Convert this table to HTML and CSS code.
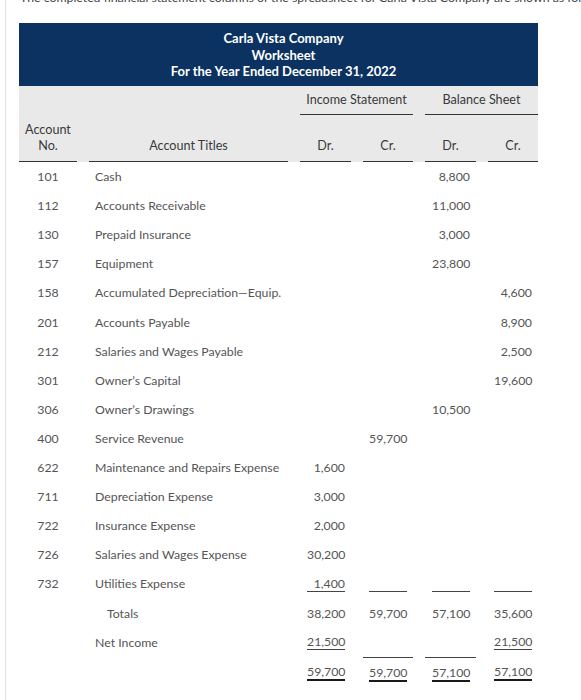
FILE: index.html
```html
<!DOCTYPE html>
<html>
<head>
<meta charset="utf-8">
<link rel="stylesheet" href="styles.css">
</head>
<body>
<div class="page">
  <p class="intro">The completed financial statement columns of the spreadsheet for Carla Vista Company are shown as follows</p>
  <div class="sheet">
    <div class="title">
      <div>Carla Vista Company</div>
      <div>Worksheet</div>
      <div>For the Year Ended December 31, 2022</div>
    </div>
    <div class="head">
      <div class="h-no">Account<br>No.</div>
      <div class="h-title">Account Titles</div>
      <div class="h-group g1">Income Statement</div>
      <div class="h-group g2">Balance Sheet</div>
      <div class="h-dc c3">Dr.</div>
      <div class="h-dc c4">Cr.</div>
      <div class="h-dc c5">Dr.</div>
      <div class="h-dc c6">Cr.</div>
    </div>
    <div class="body">
      <div class="row"><div class="no">101</div><div class="t">Cash</div><div class="n"></div><div class="n"></div><div class="n"><span class="v">8,800</span></div><div class="n"></div></div>
      <div class="row"><div class="no">112</div><div class="t">Accounts Receivable</div><div class="n"></div><div class="n"></div><div class="n"><span class="v">11,000</span></div><div class="n"></div></div>
      <div class="row"><div class="no">130</div><div class="t">Prepaid Insurance</div><div class="n"></div><div class="n"></div><div class="n"><span class="v">3,000</span></div><div class="n"></div></div>
      <div class="row"><div class="no">157</div><div class="t">Equipment</div><div class="n"></div><div class="n"></div><div class="n"><span class="v">23,800</span></div><div class="n"></div></div>
      <div class="row tall"><div class="no">158</div><div class="t">Accumulated Depreciation—Equip.</div><div class="n"></div><div class="n"></div><div class="n"></div><div class="n"><span class="v">4,600</span></div></div>
      <div class="row"><div class="no">201</div><div class="t">Accounts Payable</div><div class="n"></div><div class="n"></div><div class="n"></div><div class="n"><span class="v">8,900</span></div></div>
      <div class="row"><div class="no">212</div><div class="t">Salaries and Wages Payable</div><div class="n"></div><div class="n"></div><div class="n"></div><div class="n"><span class="v">2,500</span></div></div>
      <div class="row"><div class="no">301</div><div class="t">Owner’s Capital</div><div class="n"></div><div class="n"></div><div class="n"></div><div class="n"><span class="v">19,600</span></div></div>
      <div class="row"><div class="no">306</div><div class="t">Owner’s Drawings</div><div class="n"></div><div class="n"></div><div class="n"><span class="v">10,500</span></div><div class="n"></div></div>
      <div class="row"><div class="no">400</div><div class="t">Service Revenue</div><div class="n"></div><div class="n"><span class="v">59,700</span></div><div class="n"></div><div class="n"></div></div>
      <div class="row"><div class="no">622</div><div class="t">Maintenance and Repairs Expense</div><div class="n"><span class="v">1,600</span></div><div class="n"></div><div class="n"></div><div class="n"></div></div>
      <div class="row"><div class="no">711</div><div class="t">Depreciation Expense</div><div class="n"><span class="v">3,000</span></div><div class="n"></div><div class="n"></div><div class="n"></div></div>
      <div class="row"><div class="no">722</div><div class="t">Insurance Expense</div><div class="n"><span class="v">2,000</span></div><div class="n"></div><div class="n"></div><div class="n"></div></div>
      <div class="row"><div class="no">726</div><div class="t">Salaries and Wages Expense</div><div class="n"><span class="v">30,200</span></div><div class="n"></div><div class="n"></div><div class="n"></div></div>
      <div class="row tall"><div class="no">732</div><div class="t">Utilities Expense</div><div class="n"><span class="v u">1,400</span></div><div class="n"><span class="v u"></span></div><div class="n"><span class="v u"></span></div><div class="n"><span class="v u"></span></div></div>
      <div class="row"><div class="no"></div><div class="t indent">Totals</div><div class="n"><span class="v">38,200</span></div><div class="n"><span class="v">59,700</span></div><div class="n"><span class="v">57,100</span></div><div class="n"><span class="v">35,600</span></div></div>
      <div class="row"><div class="no"></div><div class="t">Net Income</div><div class="n"><span class="v u">21,500</span></div><div class="n"></div><div class="n"></div><div class="n"><span class="v u">21,500</span></div></div>
      <div class="row tall final"><div class="no"></div><div class="t"></div><div class="n"><span class="v dbl">59,700</span></div><div class="n rule"><span class="v dbl">59,700</span></div><div class="n rule"><span class="v dbl">57,100</span></div><div class="n"><span class="v dbl">57,100</span></div></div>
    </div>
  </div>
</div>
</body>
</html>
```

FILE: styles.css
```css
html, body {
  margin: 0;
  padding: 0;
  background: #fff;
}

body {
  font-family: Lato, "Open Sans", sans-serif;
  font-size: 12.3px;
  color: #555;
  overflow: hidden;
}

.page {
  margin-left: 5px;
  border-left: 1px solid #e2e2e2;
  padding-left: 13px;
  padding-top: 1px;
  min-height: 720px;
  margin-top: -11px;
  overflow: hidden;
}

.intro {
  margin: 0 0 18px 1px;
  font-size: 12.3px;
  line-height: 15px;
  white-space: nowrap;
  color: #444;
}

.sheet {
  width: 519px;
}

.title {
  background: #0b3260;
  color: #fff;
  font-weight: bold;
  font-size: 13px;
  line-height: 16.5px;
  text-align: center;
  padding: 7px 0 6px 10px;
}

.head {
  background: #e9e9e9;
  color: #3a3a3a;
  font-size: 12.6px;
  display: grid;
  grid-template-columns: 58px 199px 51px 50px 51px 50px;
  grid-template-rows: 29px 47px;
  column-gap: 12px;
}

.h-no {
  grid-column: 1;
  grid-row: 1 / 3;
  align-self: end;
  text-align: center;
  line-height: 16px;
  padding-bottom: 7px;
  border-bottom: 1px solid #333;
}

.h-title {
  grid-column: 2;
  grid-row: 2;
  align-self: end;
  text-align: center;
  line-height: 16px;
  padding-bottom: 7px;
  border-bottom: 1px solid #333;
}

.h-group {
  grid-row: 1;
  text-align: center;
  line-height: 28px;
  border-bottom: 1px solid #333;
}

.g1 { grid-column: 3 / 5; }
.g2 { grid-column: 5 / 7; }

.h-dc {
  grid-row: 2;
  align-self: end;
  text-align: center;
  line-height: 16px;
  padding-bottom: 7px;
  border-bottom: 1px solid #333;
}

.c3 { grid-column: 3; }
.c4 { grid-column: 4; }
.c5 { grid-column: 5; }
.c6 { grid-column: 6; }

.row {
  display: grid;
  grid-template-columns: 58px 199px 51px 50px 51px 50px;
  column-gap: 12px;
  height: 29px;
  align-items: center;
}

.row.tall {
  height: 30px;
}

.no {
  text-align: center;
}

.t {
  padding-left: 6px;
  white-space: nowrap;
}

.t.indent {
  padding-left: 18px;
}

.n {
  display: flex;
  justify-content: flex-end;
  align-items: center;
  padding-right: 6px;
  height: 100%;
  box-sizing: border-box;
}

.v {
  display: block;
  width: 38px;
  height: 15px;
  line-height: 15px;
  text-align: right;
}

.u {
  border-bottom: 1px solid #444;
}

.final .v {
  margin-top: 2px;
}

.dbl {
  border-bottom: 2px solid #1a1a1a;
}

.rule {
  border-top: 1px solid #444;
}
```
